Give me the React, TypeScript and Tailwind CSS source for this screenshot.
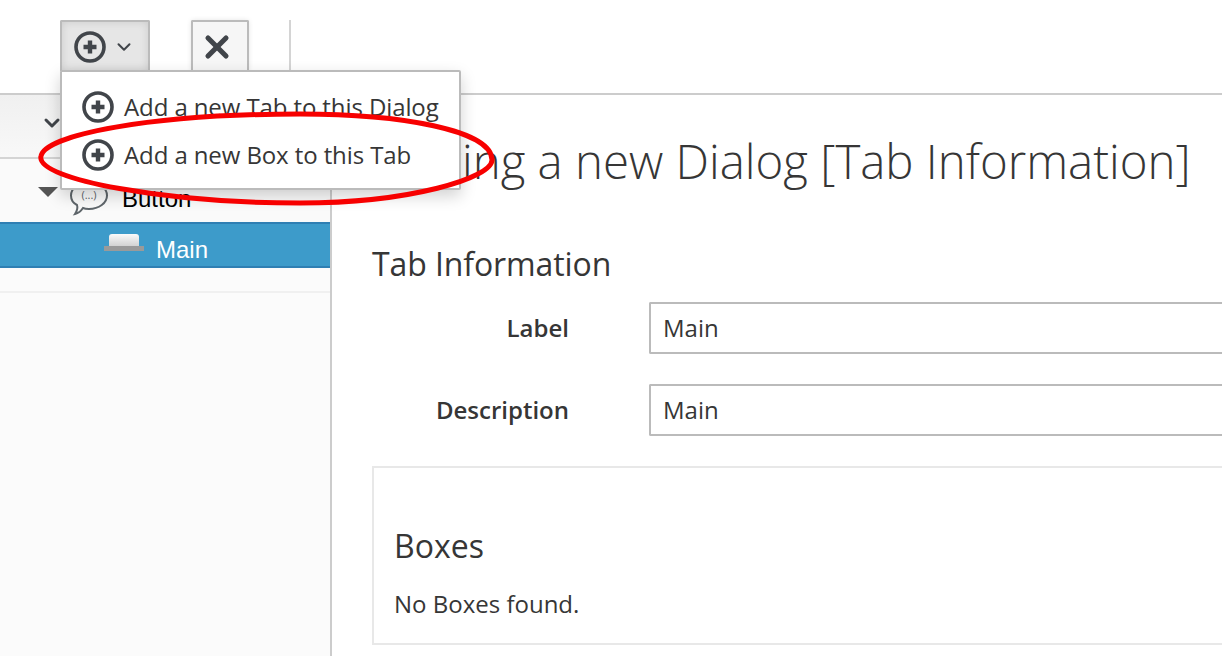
import { ChevronDown, X } from "lucide-react";

const font = { fontFamily: '"Open Sans", sans-serif' };

function PlusCircle({ size = 32 }: { size?: number }) {
  return (
    <svg width={size} height={size} viewBox="0 0 32 32" fill="none" stroke="#41454a">
      <circle cx="16" cy="16" r="14" strokeWidth="3.6" />
      <path d="M16 9.5v13M9.5 16h13" strokeWidth="4.4" />
    </svg>
  );
}

function MenuItem({ label }: { label: string }) {
  return (
    <div className="flex items-center gap-[10px] h-[48px] pl-[20px]">
      <PlusCircle />
      <span className="text-[24px] leading-[32px] text-[#363636] tracking-[-0.1px]">{label}</span>
    </div>
  );
}

function Field({ label, value }: { label: string; value: string }) {
  return (
    <div className="flex items-center h-[52px] mb-[30px]">
      <label className="w-[197px] text-right text-[24px] font-semibold text-[#363636]">{label}</label>
      <div className="ml-[80px] flex-1 h-[52px] border-2 border-[#bbb] border-r-0 rounded-l-[2px] flex items-center pl-[12px] text-[24px] text-[#363636]">
        {value}
      </div>
    </div>
  );
}

export default function App() {
  return (
    <div className="relative w-[1222px] h-[656px] overflow-hidden bg-white" style={font}>
      {/* Toolbar */}
      <div className="h-[95px] border-b-2 border-[#ccc] flex items-start pt-[20px] pl-[60px]">
        <button className="w-[90px] h-[51px] border-2 border-b-0 border-[#bbb] bg-[#e6e6e6] rounded-t-[2px] flex items-center pl-[12px] gap-[7px] shadow-[inset_0_0_8px_rgba(0,0,0,0.12)]">
          <PlusCircle />
          <ChevronDown size={22} strokeWidth={2.2} color="#41454a" />
        </button>
        <button className="ml-[41px] w-[58px] h-[51px] border-2 border-b-0 border-[#bbb] bg-[#f6f6f6] rounded-t-[2px] flex items-center justify-start pl-[6px] shadow-[0_0_5px_rgba(0,0,0,0.1)]">
          <X size={36} strokeWidth={3.4} color="#41454a" />
        </button>
        <div className="ml-[40px] w-[2px] h-[50px] bg-[#d4d4d4]" />
      </div>

      <div className="flex h-[561px]">
        {/* Sidebar */}
        <div className="w-[332px] shrink-0 border-r-2 border-[#ccc] bg-[#fbfbfb]">
          <div className="h-[64px] border-b-2 border-[#d4d4d4] bg-gradient-to-b from-[#f0f0f0] to-[#f8f8f8] flex items-center pl-[40px]">
            <ChevronDown size={24} strokeWidth={3} color="#41454a" className="mt-[-6px]" />
          </div>
          <div className="h-[63px] flex items-center pl-[38px] pt-[18px] bg-[#fafafa]">
            <span className="w-0 h-0 border-x-[10px] border-x-transparent border-t-[10px] border-t-[#555] mt-[-16px]" />
            <svg width="42" height="42" viewBox="0 0 42 42" fill="none" stroke="#5f666b" strokeWidth="2" className="ml-[10px] mt-[-2px]">
              <path d="M21 4c10 0 18 6 18 13.5S31 31 21 31c-2 0-4 0-6 -1c-2 3-4 5-8 6c2-3 3-6 2-9C5 25 3 21 3 17.5 3 10 11 4 21 4z" />
              <text x="21" y="21" textAnchor="middle" fontSize="11" stroke="none" fill="#5f666b" style={font}>(...)</text>
            </svg>
            <span className="ml-[12px] mt-[-2px] text-[24px] text-black" style={{ fontFamily: '"Liberation Sans", sans-serif' }}>Button</span>
          </div>
          <div className="h-[46px] border-y-2 border-[#2f7fb3] bg-[#3d9bca] flex items-center pl-[104px]">
            <svg width="40" height="20" viewBox="0 0 40 20" className="mt-[-6px]">
              <defs>
                <linearGradient id="btn" x1="0" y1="0" x2="0" y2="1">
                  <stop offset="0" stopColor="#fafafa" />
                  <stop offset="1" stopColor="#cfcfcf" />
                </linearGradient>
              </defs>
              <path d="M5 15V5q0-3 3-3h24q3 0 3 3v10z" fill="url(#btn)" />
              <path d="M0 14h40v5H0z" fill="#9a9a9a" />
            </svg>
            <span className="ml-[12px] mt-[9px] text-[24px] text-white" style={{ fontFamily: '"Liberation Sans", sans-serif' }}>Main</span>
          </div>
          <div className="h-[25px] border-b-2 border-[#f0f0f0]" />
        </div>

        {/* Main */}
        <div className="flex-1 min-w-0 pl-[40px]">
          <h1 className="mt-[33px] ml-[9px] whitespace-nowrap text-[47.4px] leading-[66px] font-light text-[#363636]">
            Editing a new Dialog [Tab Information]
          </h1>
          <h2 className="mt-[48px] text-[32px] leading-[44px] text-[#363636] tracking-[-0.1px]">Tab Information</h2>
          <div className="mt-[16px]">
            <Field label="Label" value="Main" />
            <Field label="Description" value="Main" />
          </div>
          <div className="h-[179px] border-2 border-r-0 border-[#e8e8e8] pt-[56px] pl-[20px]">
            <h3 className="text-[32px] leading-[44px] text-[#363636]">Boxes</h3>
            <p className="mt-[20px] text-[24px] leading-[32px] text-[#363636]">No Boxes found.</p>
          </div>
        </div>
      </div>

      {/* Dropdown menu */}
      <div className="absolute left-[60px] top-[70px] w-[401px] h-[120px] bg-white border-2 border-[#bbb] rounded-[2px] pt-[11px] shadow-[0_6px_16px_rgba(0,0,0,0.18)]">
        <MenuItem label="Add a new Tab to this Dialog" />
        <MenuItem label="Add a new Box to this Tab" />
      </div>

      {/* Annotation */}
      <svg width="1222" height="656" className="absolute inset-0 pointer-events-none" fill="none">
        <path
          d="M41 156C45 135 150 114 300 114C400 114 492 130 492 160C492 178 410 203 300 203C170 203 35 180 41 156Z"
          stroke="#f70000"
          strokeWidth="5"
        />
      </svg>
    </div>
  );
}
